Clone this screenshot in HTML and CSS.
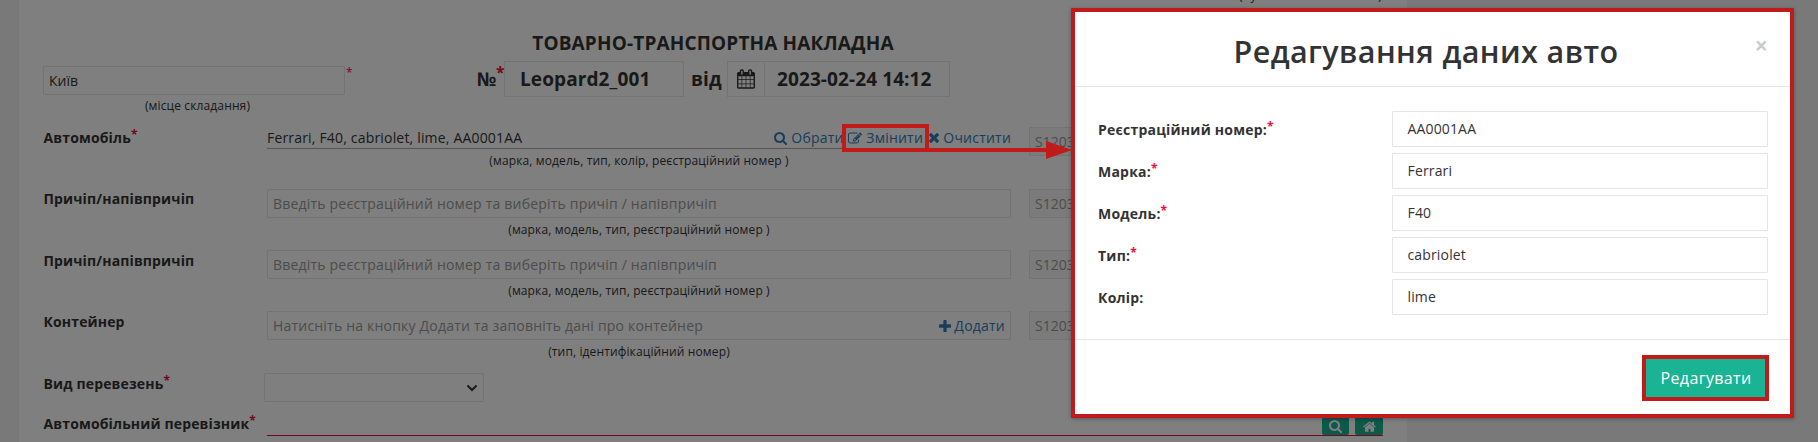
FILE: index.html
```
<!DOCTYPE html>
<html lang="uk">
<head>
<meta charset="utf-8">
<title>Товарно-транспортна накладна</title>
<link rel="stylesheet" href="styles.css">
</head>
<body>
<svg width="0" height="0" class="sprite">
  <symbol id="search" viewBox="0 0 1664 1664"><path d="M1152 704q0-185-131.500-316.500T704 256 387.500 387.500 256 704t131.500 316.500T704 1152t316.500-131.500T1152 704zm512 832q0 52-38 90t-90 38q-54 0-90-38l-343-342q-179 124-399 124-143 0-273.500-55.500t-225-150-150-225T0 704t55.500-273.500 150-225 225-150T704 0t273.500 55.500 225 150 150 225T1408 704q0 220-124 399l343 343q37 37 37 90z"/></symbol>
  <symbol id="home" viewBox="0 0 1664 1312"><path d="M1408 768v480q0 26-19 45t-45 19H960V928H704v384H320q-26 0-45-19t-19-45V768L832 293zm223-69l-62 74q-8 9-21 11h-3q-13 0-21-7L832 200 140 777q-12 8-24 7-13-2-21-11l-62-74q-8-10-7-23.500T37 654L756 55q32-26 76-26t76 26l244 204V64q0-14 9-23t23-9h192q14 0 23 9t9 23v408l219 182q10 8 11 21.500t-7 23.500z"/></symbol>
  <symbol id="edit" viewBox="0 0 1792 1408"><path d="M888 1056l116-116-152-152-116 116v56h96v96zm440-720q-16-16-33 1L945 687q-17 17-1 33t33-1l350-350q17-17 1-33zm80 594v190q0 119-84.500 203.500T1120 1408H288q-119 0-203.500-84.500T0 1120V288Q0 169 84.500 84.500T288 0h832q63 0 117 25 15 7 18 23 3 17-9 29l-49 49q-14 14-32 8-23-6-45-6H288q-66 0-113 47t-47 113v832q0 66 47 113t113 47h832q66 0 113-47t47-113V994q0-13 9-22l64-64q15-15 35-7t20 29zm-96-738l288 288-672 672H640V864zm444 132l-92 92-288-288 92-92q28-28 68-28t68 28l152 152q28 28 28 68t-28 68z"/></symbol>
  <symbol id="times" viewBox="0 0 1188 1188"><path d="M1188 956q0 40-28 68l-136 136q-28 28-68 28t-68-28L594 866l-294 294q-28 28-68 28t-68-28L28 1024q-28-28-28-68t28-68l294-294L28 300Q0 272 0 232t28-68L164 28q28-28 68-28t68 28l294 294L888 28q28-28 68-28t68 28l136 136q28 28 28 68t-28 68L866 594l294 294q28 28 28 68z"/></symbol>
  <symbol id="plus" viewBox="0 0 1408 1408"><path d="M1408 608v192q0 40-28 68t-68 28H896v416q0 40-28 68t-68 28H608q-40 0-68-28t-28-68V896H96q-40 0-68-28T0 800V608q0-40 28-68t68-28h416V96q0-40 28-68t68-28h192q40 0 68 28t28 68v416h416q40 0 68 28t28 68z"/></symbol>
  <symbol id="calendar" viewBox="0 0 1664 1792"><path d="M128 1664h288v-288H128zm352 0h320v-288H480zm-352-352h288V992H128zm352 0h320V992H480zM128 928h288V640H128zm736 736h320v-288H864zM480 928h320V640H480zm768 736h288v-288h-288zm-384-352h320V992H864zM512 448V160q0-13-9.500-22.500T480 128h-64q-13 0-22.500 9.500T384 160v288q0 13 9.500 22.500T416 480h64q13 0 22.500-9.500T512 448zm736 864h288V992h-288zM864 928h320V640H864zm384 0h288V640h-288zm32-480V160q0-13-9.500-22.500T1248 128h-64q-13 0-22.500 9.500T1152 160v288q0 13 9.500 22.500t22.500 9.500h64q13 0 22.500-9.500t9.500-22.500zm384-64v1280q0 52-38 90t-90 38H128q-52 0-90-38t-38-90V384q0-52 38-90t90-38h128v-96q0-66 47-113T416 0h64q66 0 113 47t47 113v96h384v-96q0-66 47-113t113-47h64q66 0 113 47t47 113v96h128q52 0 90 38t38 90z"/></symbol>
</svg>

<div class="page">
  <main class="sheet">
    <div class="cut-note"><span>(пункт навантаження</span><span>)</span></div>
    <h1 class="title">ТОВАРНО-ТРАНСПОРТНА НАКЛАДНА</h1>

    <div class="head">
      <div class="place">
        <div class="place-line"><div class="input place-input">Київ</div><span class="req thin">*</span></div>
        <div class="note">(місце складання)</div>
      </div>
      <div class="number">
        <span class="no">№</span><span class="req big">*</span>
        <div class="big-input doc-no">Leopard2_001</div>
        <span class="from">від</span>
        <div class="big-input addon"><svg class="i-cal"><use href="#calendar"/></svg></div>
        <div class="big-input date">2023-02-24 14:12</div>
      </div>
    </div>

    <div class="row r1">
      <div class="label">Автомобіль<span class="req">*</span></div>
      <div class="field">
        <div class="plain"><span>Ferrari, F40, cabriolet, lime, AA0001AA</span>
          <span class="links">
            <a class="pick"><svg class="i-search"><use href="#search"/></svg>Обрати</a>
            <a class="change"><svg class="i-edit"><use href="#edit"/></svg>Змінити</a>
            <a class="clear"><svg class="i-times"><use href="#times"/></svg>Очистити</a>
          </span>
        </div>
        <div class="note">(марка, модель, тип, колір, реєстраційний номер )</div>
      </div>
      <div class="input side">S12031</div>
    </div>
    <div class="row r2">
      <div class="label">Причіп/напівпричіп</div>
      <div class="field">
        <div class="input hint">Введіть реєстраційний номер та виберіть причіп / напівпричіп</div>
        <div class="note">(марка, модель, тип, реєстраційний номер )</div>
      </div>
      <div class="input side">S12031</div>
    </div>
    <div class="row r3">
      <div class="label">Причіп/напівпричіп</div>
      <div class="field">
        <div class="input hint">Введіть реєстраційний номер та виберіть причіп / напівпричіп</div>
        <div class="note">(марка, модель, тип, реєстраційний номер )</div>
      </div>
      <div class="input side">S12031</div>
    </div>
    <div class="row r4">
      <div class="label">Контейнер</div>
      <div class="field">
        <div class="input hint"><span>Натисніть на кнопку Додати та заповніть дані про контейнер</span><a><svg class="i-plus"><use href="#plus"/></svg>Додати</a></div>
        <div class="note">(тип, ідентифікаційний номер)</div>
      </div>
      <div class="input side">S12031</div>
    </div>
    <div class="row r5">
      <div class="label">Вид перевезень<span class="req">*</span></div>
      <div class="input select"><svg class="i-chev" viewBox="0 0 12 8"><path d="M1.500 1.500L6 6l4.500-4.500"/></svg></div>
    </div>
    <div class="row r6">
      <div class="label">Автомобільний перевізник<span class="req">*</span></div>
      <div class="carrier">
        <span class="btn b1"><svg class="i-search"><use href="#search"/></svg></span>
        <span class="btn b2"><svg class="i-home"><use href="#home"/></svg></span>
      </div>
    </div>
  </main>
</div>
<div class="backdrop"></div>

<div class="mark"></div>
<svg class="arrow" viewBox="0 0 150 20"><path d="M0 8h120V1l26 9-26 9v-7H0z"/></svg>

<section class="modal">
  <header class="modal-head"><h2>Редагування даних авто</h2><span class="close">×</span></header>
  <div class="modal-body">
    <div class="m-row"><div class="label">Реєстраційний номер:<span class="req">*</span></div><div class="m-input">AA0001AA</div></div>
    <div class="m-row"><div class="label">Марка:<span class="req">*</span></div><div class="m-input">Ferrari</div></div>
    <div class="m-row"><div class="label">Модель:<span class="req">*</span></div><div class="m-input">F40</div></div>
    <div class="m-row"><div class="label">Тип:<span class="req">*</span></div><div class="m-input">cabriolet</div></div>
    <div class="m-row"><div class="label">Колір:</div><div class="m-input">lime</div></div>
  </div>
  <footer class="modal-foot"><button class="submit">Редагувати</button></footer>
</section>
</body>
</html>
```
FILE: styles.css
```
* { box-sizing: border-box; }
body { margin: 0; width: 1818px; height: 442px; overflow: hidden; position: relative; font: 14px/20px "Open Sans", sans-serif; color: #333; background: #f3f3f4; }
svg { fill: currentColor; flex: none; }
.sprite { position: absolute; }
.page { height: 442px; padding-left: 19px; overflow: hidden; }
.sheet { width: 1388px; height: 442px; background: #fff; padding: 0 24px; display: flex; flex-direction: column; overflow: hidden; }
.cut-note { width: 143px; height: 22px; font-size: 12px; line-height: 17px; margin-left: 1196px; white-space: nowrap; margin-top: -13px; flex: none; display: flex; justify-content: space-between; letter-spacing: .2px; }
.title { margin: 9px 0 0; height: 43px; flex: none; font-size: 19px; line-height: 50px; font-weight: 700; text-align: center; letter-spacing: .16px; }

.head { display: flex; height: 66px; flex: none; }
.place { width: 434px; padding-top: 5px; }
.place-line { display: flex; }
.input { height: 29px; border: 1px solid #e5e6e7; border-radius: 1px; padding: 0 5px; line-height: 28px; background: #fff; white-space: nowrap; overflow: hidden; }
.place-input { width: 302px; }
.place .note { width: 309px; margin-top: 2px; }
.note { font-size: 12px; line-height: 17px; text-align: center; letter-spacing: .13px; }
.req { color: #ed0c3c; font-size: 12px; line-height: 1; font-weight: 700; position: relative; top: -4px; }
.thin { font-weight: 400; line-height: 20px; margin-left: 1px; top: -3px; }
.number { display: flex; height: 36px; font-size: 19px; line-height: 36px; font-weight: 700; letter-spacing: .1px; }
.no { width: 19px; }
.big { width: 8px; font-size: 15.5px; line-height: 36px; top: -7px; }
.big-input { border: 1px solid #e5e6e7; height: 36px; line-height: 34px; }
.doc-no { width: 180px; padding-left: 15px; }
.from { width: 43px; padding-left: 7px; }
.addon { width: 37px; border-right: 0; display: flex; align-items: center; justify-content: center; }
.date { width: 186px; padding-left: 12px; }
.i-cal { width: 18px; height: 20px; }

.row { display: flex; flex: none; }
.r1 { height: 62px; } .r2 { height: 61px; } .r3 { height: 61px; } .r4 { height: 62px; } .r5 { height: 41px; } .r6 { height: 30px; }
.label { width: 224px; padding: 1px 0 0 .5px; font-weight: 700; letter-spacing: .14px; white-space: nowrap; flex: none; }
.r2 .label, .r6 .label { padding-top: 0; }
.field { width: 744px; flex: none; }
.plain { display: flex; justify-content: space-between; height: 22px; padding-top: 1px; border-bottom: 1px solid #aaa; letter-spacing: .18px; }
.r1 .note { margin-top: 4px; }
.field .note { margin-top: 3px; }
.links { display: flex; }
a { color: #337ab7; display: flex; align-items: center; letter-spacing: .22px; }
.links a { height: 20px; }
.pick { width: 74px; }
.change { width: 81px; }
.links .i-search { width: 13px; height: 13px; margin-right: 4px; }
.i-edit { width: 14px; height: 12px; margin-right: 4px; }
.i-times { width: 10px; height: 10px; margin-right: 4px; }
.i-plus { width: 12px; height: 12px; margin-right: 3px; }
.side { width: 300px; margin-left: 18px; background: #f6f6f6; color: #999; }
.hint { color: #999; display: flex; justify-content: space-between; letter-spacing: .2px; }
.select { width: 220px; margin-left: -3px; display: flex; align-items: center; justify-content: flex-end; }
.i-chev { width: 12px; height: 8px; fill: none; stroke: #333; stroke-width: 2; }
.carrier { width: 1116px; height: 22px; border-bottom: 1px solid #ed0c3c; display: flex; justify-content: flex-end; gap: 6px; }
.btn { height: 21px; background: #1ab394; color: #fff; display: flex; align-items: center; justify-content: center; border-radius: 0 0 2px 2px; padding-top: 3px; }
.b1 { width: 27px; } .b2 { width: 28px; }
.btn .i-search { width: 13px; height: 13px; }
.i-home { width: 13px; height: 11px; }

.backdrop { position: absolute; inset: 0; background: rgba(0, 0, 0, .5); }
.mark { position: absolute; left: 842px; top: 124px; width: 87px; height: 28px; border: 4px solid #c01a1a; }
.arrow { position: absolute; left: 926px; top: 140px; width: 150px; height: 20px; color: #c01a1a; }

.modal { position: absolute; left: 1071px; top: 8px; width: 723px; height: 410px; background: #fff; border: 4px solid #c01a1a; box-shadow: 0 1px 4px rgba(0, 0, 0, .3); }
.modal-head { height: 75px; border-bottom: 1px solid #e5e5e5; position: relative; }
.modal-head h2 { margin: 0; font-size: 30.5px; line-height: 78px; font-weight: 600; text-align: center; padding-right: 13px; letter-spacing: .4px; }
.close { position: absolute; right: 22px; top: 23px; font-size: 23px; font-weight: 700; color: #ccc; }
.modal-body { height: 253px; padding: 24px 23px 0; display: flex; flex-direction: column; gap: 6px; border-bottom: 1px solid #e5e5e5; }
.m-row { display: flex; height: 36px; }
.m-row .label { width: 294px; padding: 9px 0 0; letter-spacing: .22px; }
.m-input { width: 376px; flex: none; height: 36px; border: 1px solid #e5e6e7; border-radius: 1px; padding-left: 14.5px; line-height: 34px; letter-spacing: .15px; }
.modal-foot { display: flex; justify-content: flex-end; padding: 15px 21px 0 0; }
.submit { width: 127px; height: 46px; border: 4px solid #c01a1a; background: #1ab394; color: #fff; font: 16px/38px "Open Sans", sans-serif; letter-spacing: .35px; padding: 0 0 0 1px; }
```
